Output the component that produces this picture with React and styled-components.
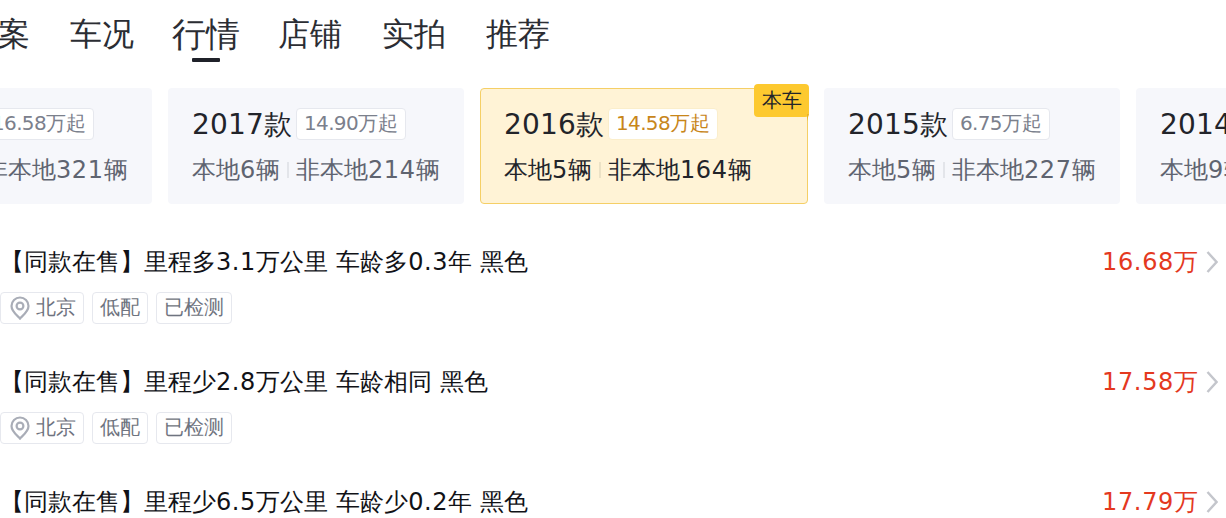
import React from 'react';
import styled, { createGlobalStyle } from 'styled-components';

const GlobalStyle = createGlobalStyle`
  html, body {
    margin: 0;
    padding: 0;
    background: #fff;
    overflow: hidden;
  }
  body {
    font-family: "DejaVu Sans", sans-serif;
  }
`;

const Page = styled.div`
  width: 1226px;
  height: 518px;
  overflow: hidden;
`;

const TabBar = styled.nav`
  display: flex;
  gap: 40px;
  height: 88px;
  margin-left: -34px;
`;

const Tab = styled.div`
  position: relative;
  display: flex;
  justify-content: center;
  width: 64px;
  height: 39px;
  padding-top: 15px;
  font-size: ${(p) => (p.$active ? '34px' : '32px')};
  line-height: 38px;
  color: #2b2d33;
  white-space: nowrap;

  ${(p) => p.$active && `
    &::after {
      content: '';
      position: absolute;
      left: 18px;
      top: 58px;
      width: 28px;
      height: 4px;
      border-radius: 1px;
      background: #1f2129;
    }
  `}
`;

const YearStrip = styled.div`
  display: flex;
  gap: 16px;
  margin-left: -144px;
  height: 116px;
`;

const YearCard = styled.div`
  position: relative;
  flex: none;
  box-sizing: border-box;
  height: 116px;
  padding: ${(p) => (p.$current ? '19px 23px' : '20px 24px')};
  border-radius: 4px;
  background: ${(p) => (p.$current ? '#fff3d6' : '#f6f7fb')};
  border: ${(p) => (p.$current ? '1px solid #f5cf66' : 'none')};
  color: ${(p) => (p.$current ? '#22242a' : '#5f6470')};
  white-space: nowrap;
`;

const YearHead = styled.div`
  display: flex;
  align-items: flex-start;
  gap: 4px;
  height: 32px;
`;

const YearName = styled.span`
  font-size: 28px;
  line-height: 34px;
  color: #22242a;
`;

const PriceTag = styled.span`
  box-sizing: border-box;
  height: 32px;
  padding: 0 7px;
  font-size: 20px;
  line-height: 28px;
  border-radius: 4px;
  background: #fff;
  border: 1px solid ${(p) => (p.$current ? '#fbeecb' : '#e6e8ee')};
  color: ${(p) => (p.$current ? '#c8861a' : '#7b808c')};
`;

const StockRow = styled.div`
  display: flex;
  align-items: center;
  gap: 7px;
  margin-top: 15px;
  font-size: 24px;
  line-height: 30px;
`;

const StockDivider = styled.i`
  width: 2px;
  height: 16px;
  background: ${(p) => (p.$current ? '#ece2c6' : '#e3e5ea')};
`;

const CurrentBadge = styled.span`
  position: absolute;
  top: -5px;
  right: -2px;
  width: 55px;
  height: 33px;
  border-radius: 4px;
  background: #fdc92f;
  color: #22242a;
  font-size: 20px;
  line-height: 33px;
  text-align: center;

  &::after {
    content: '';
    position: absolute;
    right: 0;
    top: 30px;
    border-top: 7px solid #e8b428;
    border-right: 2px solid transparent;
  }
`;

const CarList = styled.div`
  display: flex;
  flex-direction: column;
  padding: 40px 8px 0 0;
`;

const CarRow = styled.div`
  height: 120px;
`;

const CarLine = styled.div`
  display: flex;
  align-items: center;
  justify-content: space-between;
  height: 36px;
`;

const CarTitle = styled.span`
  font-size: 24px;
  line-height: 36px;
  color: #111217;
  white-space: nowrap;
`;

const PriceBox = styled.span`
  display: flex;
  align-items: center;
  gap: 8px;
  font-size: 24px;
  line-height: 36px;
  color: #e4391f;
`;

const TagRow = styled.div`
  display: flex;
  gap: 8px;
  margin-top: 12px;
`;

const Tag = styled.span`
  display: inline-flex;
  align-items: center;
  gap: 4px;
  box-sizing: border-box;
  height: 32px;
  padding: 0 7px 1px;
  border: 1px solid #e6e8ee;
  border-radius: 4px;
  font-size: 20px;
  color: #6f7480;
`;

const TagIcon = styled.svg`
  margin-top: 1px;
`;

// latin runs set a little wider or tighter than the font's own advance
const Latin = styled.span`
  letter-spacing: ${(p) => p.$spacing}px;
`;

const Spaced = ({ text, spacing }) =>
  text.split(/([\d.\s]+)/).map((part, i) =>
    i % 2 ? <Latin key={i} $spacing={spacing}>{part}</Latin> : part
  );

const PinIcon = () => (
  <TagIcon width="24" height="24" viewBox="0 0 24 24" fill="none" stroke="#a9adb7" strokeWidth="2.2">
    <path d="M12 22.5c-1.5-2-8.5-6.5-8.5-12.5a8.5 8.5 0 0 1 17 0c0 6-7 10.500-8.500 12.500z" />
    <circle cx="12" cy="10" r="3.4" />
  </TagIcon>
);

const Chevron = () => (
  <svg width="12" height="22" viewBox="0 0 12 22" fill="none" stroke="#c4c6cc" strokeWidth="2.4">
    <path d="M1.5 1l9 10-9 10" />
  </svg>
);

const tabs = ['档案', '车况', '行情', '店铺', '实拍', '推荐'];

const years = [
  { year: '2018款', price: '16.58万起', local: 3, other: 321, width: 296 },
  { year: '2017款', price: '14.90万起', local: 6, other: 214, width: 296 },
  { year: '2016款', price: '14.58万起', local: 5, other: 164, width: 328, current: true },
  { year: '2015款', price: '6.75万起', local: 5, other: 227, width: 296 },
  { year: '2014款', price: '5.98万起', local: 9, other: 186, width: 296 },
];

const cars = [
  { title: '【同款在售】里程多3.1万公里 车龄多0.3年 黑色', price: '16.68万' },
  { title: '【同款在售】里程少2.8万公里 车龄相同 黑色', price: '17.58万' },
  { title: '【同款在售】里程少6.5万公里 车龄少0.2年 黑色', price: '17.79万' },
];

const App = () => (
  <Page>
    <GlobalStyle />
    <TabBar>
      {tabs.map((t) => (
        <Tab key={t} $active={t === '行情'}>{t}</Tab>
      ))}
    </TabBar>
    <YearStrip>
      {years.map((y) => (
        <YearCard key={y.year} $current={y.current} style={{ width: y.width }}>
          <YearHead>
            <YearName><Spaced text={y.year} spacing={0.18} /></YearName>
            <PriceTag $current={y.current}><Spaced text={y.price} spacing={-0.64} /></PriceTag>
          </YearHead>
          <StockRow>
            <span><Spaced text={`本地${y.local}辆`} spacing={0.66} /></span>
            <StockDivider $current={y.current} />
            <span><Spaced text={`非本地${y.other}辆`} spacing={0.66} /></span>
          </StockRow>
          {y.current && <CurrentBadge>本车</CurrentBadge>}
        </YearCard>
      ))}
    </YearStrip>
    <CarList>
      {cars.map((c) => (
        <CarRow key={c.title + c.price}>
          <CarLine>
            <CarTitle><Spaced text={c.title} spacing={0.6} /></CarTitle>
            <PriceBox><span><Spaced text={c.price} spacing={0.66} /></span><Chevron /></PriceBox>
          </CarLine>
          <TagRow>
            <Tag><PinIcon />北京</Tag>
            <Tag>低配</Tag>
            <Tag>已检测</Tag>
          </TagRow>
        </CarRow>
      ))}
    </CarList>
  </Page>
);

export default App;
